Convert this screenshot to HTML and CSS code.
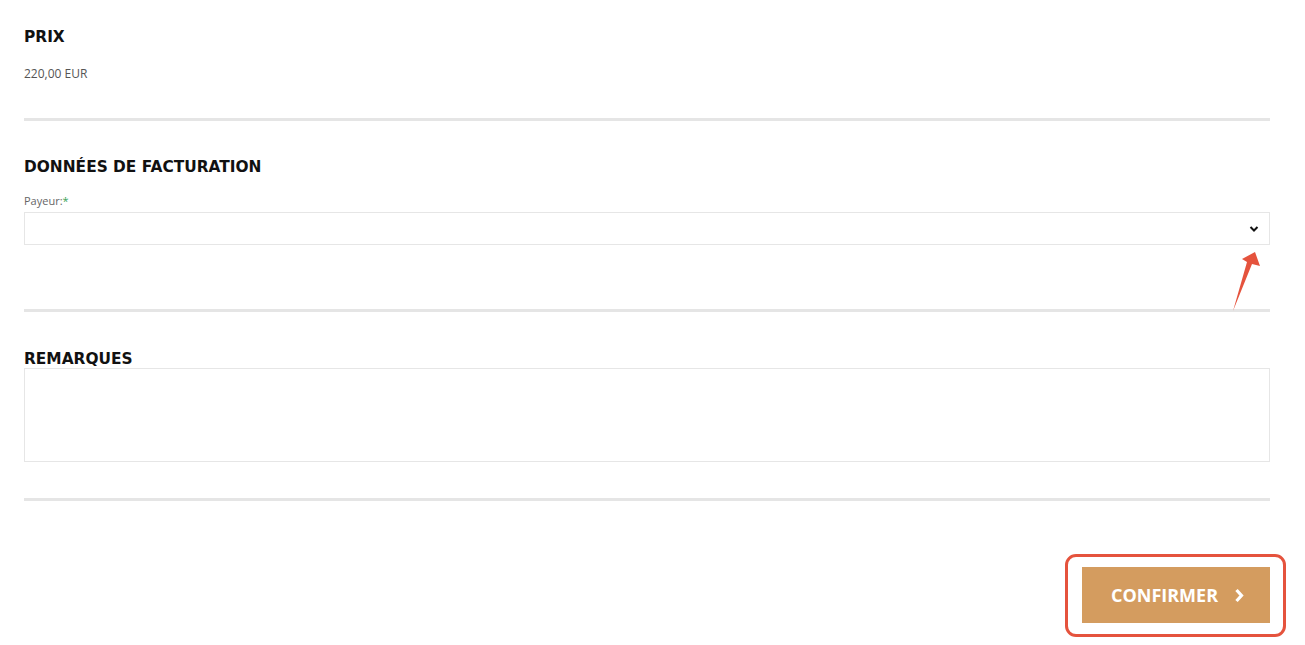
FILE: index.html
```
<!DOCTYPE html>
<html lang="fr">
<head>
<meta charset="utf-8">
<title>Réservation</title>
<link rel="stylesheet" href="styles.css">
</head>
<body>
<div class="page">
  <section class="block block-price">
    <h2 class="title">PRIX</h2>
    <p class="price">220,00 EUR</p>
  </section>
  <hr class="divider">
  <section class="block block-billing">
    <h2 class="title">DONNÉES DE FACTURATION</h2>
    <label class="label">Payeur:<span class="req">*</span></label>
    <div class="select">
      <svg class="chev" width="10" height="8" viewBox="0 0 10 8"><path d="M1.5 2 L5 5.5 L8.5 2" fill="none" stroke="#111" stroke-width="2"/></svg>
    </div>
  </section>
  <hr class="divider">
  <section class="block block-notes">
    <h2 class="title">REMARQUES</h2>
    <div class="textarea"></div>
  </section>
  <hr class="divider">
  <div class="actions">
    <button class="confirm">CONFIRMER
      <svg class="arrow-r" width="11" height="15" viewBox="0 0 11 15"><path d="M2.5 2 L7.5 7.5 L2.5 13" fill="none" stroke="#fff" stroke-width="3.2"/></svg>
    </button>
  </div>
</div>
<div class="annot-box"></div>
<svg class="annot-arrow" width="40" height="70" viewBox="1225 245 40 70">
  <polygon points="1255,252 1242,259 1247,262 1233,311 1252,264 1260,266" fill="#e5533d"/>
</svg>
</body>
</html>
```
FILE: styles.css
```
html, body { margin: 0; padding: 0; background: #fff; }
body { font-family: "Open Sans", "Liberation Sans", sans-serif; color: #222; }
.page { padding: 0 35px 0 24px; width: 1246px; }
.title {
  margin: 0;
  font-family: "DejaVu Sans", sans-serif;
  font-weight: bold;
  font-size: 15.4px;
  line-height: 18px;
  color: #111;
}
.block-price { padding-top: 28px; height: 118px; box-sizing: border-box; }
.price { margin: 20px 0 0; font-size: 12px; line-height: 16px; color: #555; }
.divider { margin: 0; border: 0; height: 3px; background: #e5e5e5; }
.block-billing { padding-top: 37px; height: 188px; box-sizing: border-box; }
.label { display: block; margin-top: 18px; font-size: 11px; line-height: 14px; color: #666; }
.req { color: #3aa457; }
.select {
  margin-top: 4px; height: 33px; box-sizing: border-box;
  border: 1px solid #e6e6e6; display: flex; align-items: center; justify-content: flex-end; padding-right: 10px;
}
.block-notes { padding-top: 38px; height: 186px; box-sizing: border-box; }
.textarea { height: 94px; box-sizing: border-box; border: 1px solid #e6e6e6; }
.actions { display: flex; justify-content: flex-end; padding-top: 66px; }
.confirm {
  width: 188px; height: 56px; border: 0; background: #d49c5f; color: #fff;
  font-family: "Open Sans", sans-serif; font-weight: bold; font-size: 18px;
  display: flex; align-items: center; justify-content: center; gap: 16px; padding: 0 0 0 4px;
}
.annot-box {
  position: absolute; left: 1065px; top: 554px; width: 221px; height: 83px;
  box-sizing: border-box; border: 3px solid #e5533d; border-radius: 11px;
}
.annot-arrow { position: absolute; left: 1225px; top: 245px; }
```
